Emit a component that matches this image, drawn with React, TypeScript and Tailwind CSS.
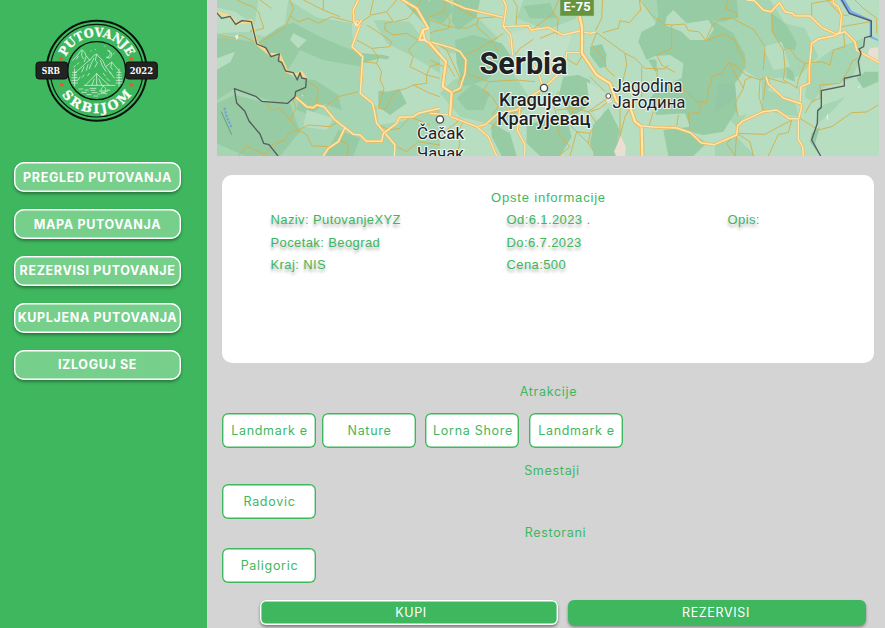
import React from "react";

const MENU = ["PREGLED PUTOVANJA", "MAPA PUTOVANJA", "REZERVISI PUTOVANJE", "KUPLJENA PUTOVANJA", "IZLOGUJ SE"];

function Logo() {
  return (
    <svg className="block h-[120px] w-[145px]" viewBox="0 0 435 360" fill="none">
      <defs>
        <path id="arcTop" d="M113 182A102 102 0 0 1 317 182" />
        <path id="arcBottom" d="M88 182A127 127 0 0 0 342 182" />
      </defs>
      <circle cx="215" cy="182" r="150" stroke="#08120b" strokeWidth="6" />
      <circle cx="215" cy="182" r="139" stroke="#08120b" strokeWidth="3.5" />
      <circle cx="215" cy="182" r="87" stroke="#08120b" strokeWidth="4" />
      <g fill="#fff" stroke="#fff" strokeWidth=".8" fontFamily="'DejaVu Serif',serif" fontWeight="700">
        <text textAnchor="middle" fontSize="37">
          <textPath href="#arcTop" startOffset="50%" textLength="234" lengthAdjust="spacingAndGlyphs">PUTOVANJE</textPath>
        </text>
        <text textAnchor="middle" fontSize="38">
          <textPath href="#arcBottom" startOffset="50%" textLength="246">SRBIJOM</textPath>
        </text>
      </g>
      <g fill="#ed5a24">
        <circle cx="108" cy="146" r="5.5" />
        <circle cx="319" cy="146" r="5.5" />
        <circle cx="110" cy="224" r="5.5" />
        <circle cx="319" cy="224" r="5.5" />
      </g>
      <g stroke="#dff5e4" strokeWidth="2.2" strokeLinecap="round" strokeLinejoin="round">
        <path d="M143 151L158 135L164 126L171 119L179 127L183 137L194 151" />
        <path d="M150 189L167 174L184 158L197 148L206 137L215 132L224 143L233 151L241 169L256 188L268 204" />
        <path d="M244 169L260 156L269 167L281 181" />
        <path d="M215 133L211 151L217 158L210 171M207 145L198 162L193 176M226 151L232 168L243 184M171 121L170 137L175 146M160 139L154 148M183 140L178 155M260 159L257 171L262 178M177 171L170 186M189 164L184 181" />
        <path d="M215 191L181 226M215 191L252 226M215 192V225M208 207L201 225M222 207L230 225M178 226H270" />
        <path d="M149 177V228M143 187H155M142 195H156M141 203H157M140 211H158M140 219H158" />
        <path d="M282 177V228M276 187H288M275 195H289M274 203H290M273 211H291M273 219H291" />
        <path d="M249 121C260 127 257 142 244 142C263 150 267 126 249 121Z" />
        <path d="M162 237H174M181 240H190M170 247H184M195 235H213M198 241H210M201 248H216M186 254H198M206 258H218M246 240H255M219 252H224" />
        <path d="M228 252L243 245M227 246L245 252M229 241C225 235 234 234 234 227C242 234 244 237 240 242M223 243H248" />
        <path d="M240 108V109M211 118V119M266 131V132M198 122V123M151 167L146 171M161 158L157 163M245 204L253 213M165 201L160 209M177 195L172 202M193 190L188 197M235 190L241 198M253 185L258 191" />
      </g>
      <g fill="#222423" stroke="#101211" strokeWidth="3">
        <rect x="33" y="156" width="95" height="51" rx="9" />
        <rect x="302" y="156" width="95" height="51" rx="9" />
      </g>
      <g fill="#fff" fontFamily="'DejaVu Serif',serif" fontWeight="700" fontSize="25">
        <text x="50" y="191" textLength="55" lengthAdjust="spacingAndGlyphs">SRB</text>
        <text x="314" y="191" textLength="70" lengthAdjust="spacingAndGlyphs">2022</text>
      </g>
    </svg>
  );
}

function Road({ d, w = 9 }: { d: string; w?: number }) {
  return (
    <g fill="none" strokeLinejoin="round">
      <path d={d} stroke="#eeb95f" strokeWidth={w} />
      <path d={d} stroke="#ffe7ac" strokeWidth={w * 0.5} />
    </g>
  );
}

function TripMap() {
  return (
    <svg className="block h-[156px] w-[662px]" viewBox="0 0 662 156">
      <rect width="662" height="156" fill="#b8dec2" />
      <g transform="translate(-7 0) scale(.333333)">
        <path fill="#a5d5b2" d="M20 0H235L320 52L425 70L430 145L455 172L450 280L500 320L505 375L600 360L690 390V470H20Z" />
        <path fill="#96cba4" d="M20 110L130 125L140 133L185 90L250 68L330 110L400 140L455 160L520 165L540 170L500 208L340 180L270 150L230 215L250 235L315 240L385 285L395 330L330 305L280 280L250 300L210 310L145 290L74 266L20 300Z" />
        <path fill="#96cba4" d="M74 285L155 305L240 310L270 395L210 468H105L20 430V310ZM385 390L450 415L430 468H345ZM505 245L550 230L590 310L540 345L505 320ZM575 0H655L690 30V90L650 80ZM270 280L310 270L345 310L300 345L260 330Z" />
        <path fill="#b8dec2" d="M20 22L75 35L125 68L120 95L20 100ZM145 0H235L225 70L165 110L130 100ZM455 190L510 175L600 190L625 255L530 275L450 265ZM250 100L290 120L265 145L240 120ZM20 175L75 155L62 185L20 210ZM290 330L370 355L350 390L280 380Z" />
        <path fill="#a5d5b2" d="M490 60L600 65L640 120L690 150V220L610 170L530 130ZM610 345L690 320V410L580 430L530 400Z" />
        <path fill="none" stroke="#d3b04b" strokeWidth="2.8" d="M80 0L105 12L130 20L145 35L162 85L120 95M150 0L185 25M20 105L80 116L90 105L145 130L195 100L225 82L240 50L250 25L240 0M240 48L265 65L295 55L325 70L365 50L440 70M280 0L340 30L390 50M340 30V0M455 65L485 45L530 35L560 0M480 45L490 0M530 35L550 65L525 70L525 90L550 105L590 100L625 120M555 65L595 55L635 0M440 120L485 145L540 140L545 125L495 90L470 75M485 145L505 170L500 190L460 185M500 190L515 215L510 240L522 265L515 290L505 325L525 328L555 275L590 265L610 255L660 280L690 290M625 120L595 150L610 170L600 200L650 225L690 235M690 190L660 200L650 225L650 250L610 255M295 245L325 265L318 315L345 320L385 290L445 275M255 290L250 300L258 325L240 360L265 390L290 405L305 435M168 310L185 330L210 325L240 360M265 390L235 400L225 420L185 435L165 465L110 438L85 468M265 390L295 375L360 380L385 365M305 438L370 440M385 415L415 435L410 468M505 375L540 390L570 385L600 350L660 375M550 435L590 455L625 425L690 435" />
        <Road d="M445 0L430 30L432 62L453 65L426 140L458 170L451 280L488 310L500 370L555 435L553 468" />
        <Road d="M430 62L442 78L455 60M255 290L290 320L310 323L320 315L342 320L375 360L405 383L430 403L450 405L470 424L515 424L520 400L560 370L568 352L610 350L625 340L690 325M405 383L385 425L355 445L340 468" />
        <Road w={11} d="M570 -5L620 25L655 85L638 90L645 120L694 170M638 90L628 120H645" />
        <path fill="none" stroke="#fbd887" strokeWidth="9" d="M20 38L60 50L80 70L124 62L140 130L180 163L208 165L230 214L260 224L275 218L288 237" />
        <path fill="none" stroke="#555c59" strokeWidth="4" strokeLinejoin="round" d="M20 38L35 55L60 49L77 73L96 62L124 65L140 132L167 143L183 170L208 162L205 183L215 187L227 213L250 218L262 240L270 218L275 234L289 237L287 262L257 275L255 290L233 310L155 304L137 289L73 266L80 309L104 333L117 363L150 402L161 430L177 434L204 468" />
        <path stroke="#6b9fe1" strokeWidth="6" fill="none" strokeDasharray="7 4" d="M43 323L50 350L65 382" />
        <path stroke="#6a9b83" strokeWidth="3" d="M34 335L65 404" />
        <path fill="#e8eded" d="M75 108l8-5 3 10-7 6zM432 70l7-4 3 10-5 3zM275 284l5 2-3 4z" />
      </g>
      <g transform="translate(213 0) scale(.333333)">
        <path fill="#a5d5b2" d="M0 0H50L150 60L205 115L160 160L60 160L0 120ZM280 0L410 0L440 55L350 90L260 55ZM70 240L170 200L250 220L310 310L210 380L90 350L30 280Z" />
        <path fill="#96cba4" d="M75 120L130 105L215 130L245 170L170 240L100 260L80 190ZM400 230L445 225L480 240V315L425 350L385 290ZM490 375L535 325L568 390L555 468H495L480 430ZM290 375L405 340L425 410L390 468H330L290 430ZM185 370L240 400L260 468H215L185 410ZM0 0H55L70 30L40 70L0 55ZM70 0H150L140 50L85 90L65 65ZM80 295L130 250L180 280L160 330L110 330ZM280 18L360 10L380 55L300 55Z" />
        <path fill="#c0e0c7" d="M310 80L425 105L400 185L330 190L240 145L230 105ZM470 245L530 280L510 370L480 320Z" />
        <path fill="none" stroke="#d3b04b" strokeWidth="2.8" d="M50 0L40 35L0 50M40 35L60 60L55 85L10 95L0 100M75 0L90 30L145 55L200 50M145 55L140 80L185 120L205 155M220 100L190 120L140 150L105 165M250 0L262 20L258 75M0 60L60 80L110 85L140 70M385 0L370 40L305 90L290 80M370 40L385 55L380 105M380 95L330 115M310 118L270 145L255 165M400 170L440 195L460 160M400 170L385 205M110 220L175 245L260 240L315 245M110 215L85 245L95 270L70 280M0 120L50 150L95 245M50 190L75 230M0 180L40 200M175 250L160 270L185 290L205 320L185 345M385 275L370 310L380 350L385 400L420 440L385 468M380 330L430 325L475 335L525 300L545 285M430 325L420 375L440 395L480 400L500 370L475 335M440 395L475 430L500 468M440 395L420 468M475 430L480 400M605 315L585 350L570 410L550 468M90 360L50 390L25 420L0 415M100 365L80 400L90 430L80 468M265 330L240 350L250 375M180 390L200 365L270 325L330 280" />
      </g>
      <g transform="translate(373 0) scale(.333333)">
        <path fill="#a5d5b2" d="M155 0H305L300 50L200 75L175 35ZM280 0H540V200L465 200L300 70ZM460 165L540 210V260L440 380L400 340Z" />
        <path fill="#96cba4" d="M200 0H440L445 50L400 65L365 60L430 100L465 165L462 205L440 250V330L400 395L340 405L300 395L350 430L310 468H235L220 390L300 380L285 340L200 345L175 300L210 260L275 235L280 190L240 165L195 168L170 180L145 125L155 95L195 75L205 45ZM0 140L35 132L50 165L45 200L30 205L0 165ZM10 375L55 325L88 390L75 468H10ZM175 180L195 178L215 205L195 215Z" />
        <path fill="#b8dec2" d="M230 50L250 30L290 70L355 60L372 88L350 120L300 120L275 95L225 75ZM200 185L240 165L280 195L265 235L235 232L200 210Z" />
        <path fill="#94c8a4" d="M385 255L435 248L455 270L430 300L375 340Z" />
        <path fill="none" stroke="#d3b04b" strokeWidth="2.8" d="M148 0L152 30L118 68L90 62L85 85L38 98M38 0L35 55L15 95M150 0L185 45L222 73L245 75L285 72L295 92L327 95L348 122L400 102L435 120L445 150L465 180V205M245 75V145L200 165L215 195L255 217M20 98L105 160L135 175L165 205L225 207L235 195M105 160L110 195L98 245M20 98L5 135L45 180L48 205L75 230M155 200V290M202 207L200 245L225 260M200 245L275 262L320 305L350 308L355 270L368 228L395 220L415 187M320 305L332 320L325 338L295 340L300 388M265 345L260 378M90 325V410M190 335L178 375M2 335L30 325L60 300M0 230L45 275" />
        <path fill="#eadfd4" d="M72 455L92 408L108 440L105 468H80ZM48 300l7-15 12 20-15 5z" />
      </g>
      <g transform="translate(213 0) scale(.333333)">
        <Road w={8} d="M35 -5L105 25L220 52M218 -5L229 20L220 80L242 105L248 165M220 80L295 77L303 90L355 82L400 105L448 93L480 100L497 96M455 158H410L405 205L340 265L300 290L260 330L205 340L165 374L140 380L62 348" />
        <Road w={8} d="M340 265L325 220L310 190M270 320L262 390L285 435L283 468M62 350L140 380L175 410L200 468M0 125L70 145L90 155L108 180L105 220L90 265L62 278M0 340L62 345" />
        <Road w={12} d="M-5 125L30 165L48 185L38 260L65 278L60 348" />
        <Road w={13} d="M448 45L456 80V160L500 225L540 250L560 305L600 320L615 365L635 380L637 470" />
      </g>
      <g transform="translate(438 0) scale(.333333)">
        <path fill="#a5d5b2" d="M345 0L390 70L450 85L490 170L430 230L350 235L330 200L330 130L300 80ZM530 150L625 115L615 180L590 235L500 265L475 310L450 290L460 200ZM550 300L570 290L535 330L490 370L490 320ZM310 260L420 300L430 350L320 330ZM180 430L240 405L300 468H180Z" />
        <path fill="#96cba4" d="M350 40L395 75L425 130L420 150L380 140L350 95ZM605 235L630 215H670V245L625 265ZM395 200L415 215L420 245L395 235Z" />
        <path fill="#b8dec2" d="M470 0H530L545 80L490 65ZM325 140L380 125L405 200L355 210ZM240 250L270 210L320 245V325L250 350Z" />
        <path fill="#94c8a4" d="M470 400L495 380L480 430L495 468L465 425Z" />
        <path fill="none" stroke="#d3b04b" strokeWidth="2.8" d="M220 0L212 25L245 40L247 52L200 57L172 75L152 122M235 57L295 88L330 140L325 210M350 38L352 95L385 150L390 205L385 240L430 265M385 150L405 145L425 175L450 190L500 185L525 195L535 150L570 140L565 95M515 0L555 42L580 48M560 80L648 65M600 0L625 25L665 55V100M530 0L470 10V48M222 187L240 195L272 225L315 240L333 232L395 250M222 187L265 265L240 310L250 350M265 265L270 240L290 230M315 240L312 290L325 333M333 232L325 300M245 400L330 403L410 360L400 398L370 403L340 468M245 400L285 425L295 468M245 400L215 430L240 468M245 400L240 468M435 355L490 390L530 380L590 338L635 336L670 315M450 340L470 305L495 295L495 255L555 250L580 212L592 182L610 175M425 265L430 240L450 190" />
        <path fill="#7baaf0" d="M553 -3L568 -3L590 32L650 60V108L670 119V123L644 113V62L582 43Z" />
        <path fill="#eadfd4" d="M635 170L645 145L670 142V190L650 182Z" />
        <Road d="M275 0L298 2L325 30L348 35L373 8L390 35L413 40L418 47L465 48L500 82L545 103L555 95L560 45L550 20L535 10V-5M545 103L570 95L600 125L605 150L672 188M545 106L490 117L470 130L463 200V250L438 260L435 310L440 320L430 360V418L443 440L445 470" />
        <Road d="M333 230L340 252L385 294L440 312M-40 378L-5 381L65 384L107 398L138 428L178 434L245 405L248 377L260 365L325 335L365 330L403 356H430" />
        <path fill="none" stroke="#54605d" strokeWidth="4" d="M560 0L583 40L649 63V108L629 113L626 140L612 147L618 160L610 185L616 225L568 235V258L499 272V322L488 332L487 370L470 420L497 468" />
        <path fill="#e8eded" d="M514 352l4-12 2 22zM608 260l8-3-4 8z" />
      </g>
      <rect x="343" y="-4" width="34" height="20" fill="#659441" stroke="#b0d0a0" strokeWidth=".5" />
      <text x="346.5" y="11" fontFamily="Roboto,sans-serif" fontWeight="700" fontSize="12" fill="#fff" textLength="27" lengthAdjust="spacingAndGlyphs">E-75</text>
      <g fill="#fff" stroke="#4b4d4d" strokeWidth="1.4">
        <circle cx="327" cy="88" r="3.6" />
        <circle cx="223" cy="119.5" r="3.6" />
        <circle cx="391.3" cy="96" r="2.4" strokeWidth="1" />
      </g>
      <g fontFamily="Roboto,sans-serif" fill="#202124" stroke="#fff" strokeWidth="2.2" strokeOpacity=".8" strokeLinejoin="round" paintOrder="stroke">
        <text x="262.5" y="73.5" fontWeight="700" fontSize="31" textLength="88" lengthAdjust="spacingAndGlyphs">Serbia</text>
        <text x="282" y="106" fontWeight="500" fontSize="18" textLength="90.5" lengthAdjust="spacingAndGlyphs">Kragujevac</text>
        <text x="280" y="124.5" fontWeight="500" fontSize="18" textLength="93.5" lengthAdjust="spacingAndGlyphs">Крагујевац</text>
        <text x="395.5" y="92" fontSize="17.5" textLength="70" lengthAdjust="spacingAndGlyphs">Jagodina</text>
        <text x="395.5" y="108" fontSize="17" textLength="73" lengthAdjust="spacingAndGlyphs">Јагодина</text>
        <text x="200" y="139" fontSize="17" textLength="47" lengthAdjust="spacingAndGlyphs">Čačak</text>
        <text x="200" y="159" fontSize="17" textLength="47" lengthAdjust="spacingAndGlyphs">Чачак</text>
      </g>
    </svg>
  );
}

function Chip({ children }: { children: React.ReactNode }) {
  return (
    <button className="flex h-[35px] w-[94px] shrink-0 items-center justify-center rounded-[6px] bg-white pt-px pl-px text-[12.5px] tracking-[0.7px] whitespace-nowrap text-[#3eb75e] shadow-[inset_0_0_0_1.4px_#3eb75e]">
      {children}
    </button>
  );
}

function Heading({ children }: { children: React.ReactNode }) {
  return <h2 className="h-5 pl-px text-center text-[12.5px] leading-5 tracking-[0.7px] text-[#3eb75e]">{children}</h2>;
}

export default function App() {
  return (
    <div className="flex h-[628px] w-[885px] overflow-hidden bg-[#d4d4d4] font-['Inter',sans-serif]">
      <aside className="w-[207.4px] shrink-0 bg-[#3eb75e]">
        <div className="pt-[10px] pl-[25px]">
          <Logo />
        </div>
        <nav className="mt-8 ml-[14px] flex flex-col gap-[16.9px]">
          {MENU.map((label) => (
            <button
              key={label}
              className="flex h-[30px] w-[167px] items-center justify-center rounded-[10px] bg-[#76cf8b] pt-[2px] text-[12.5px] font-bold tracking-[0.65px] whitespace-nowrap text-white shadow-[inset_0_0_0_1.4px_#fff,0_2px_3px_rgba(0,0,0,0.35)]"
            >
              {label}
            </button>
          ))}
        </nav>
      </aside>
      <main className="flex min-w-0 flex-1 flex-col">
        <div className="pl-[9.6px]">
          <TripMap />
        </div>
        <section className="mt-[19px] ml-[14.6px] h-[188px] w-[652px] rounded-[10px] bg-white pt-[13px] font-['Liberation_Sans',Arial,sans-serif] text-[13px] text-[#3eb75e]">
          <h2 className="h-5 pl-px text-center leading-5 tracking-[0.8px]">Opste informacije</h2>
          <div className="grid grid-cols-[236px_221px_auto] pt-px pl-[48.5px] leading-[22.6px] tracking-[0.4px] [text-shadow:0_3px_3px_rgba(0,0,0,0.3)]">
            <div>
              <p>Naziv: PutovanjeXYZ</p>
              <p>Pocetak: Beograd</p>
              <p>Kraj: NIS</p>
            </div>
            <div>
              <p>Od:6.1.2023 .</p>
              <p>Do:6.7.2023</p>
              <p>Cena:500</p>
            </div>
            <p>Opis:</p>
          </div>
        </section>
        <div className="mt-[19px] ml-[14.6px] w-[652px]">
          <Heading>Atrakcije</Heading>
          <div className="mt-[11px] flex">
            <Chip>Landmark e</Chip>
            <div className="ml-[6px] flex gap-[9.5px]">
              <Chip>Nature</Chip>
              <Chip>Lorna Shore</Chip>
              <Chip>Landmark e</Chip>
            </div>
          </div>
          <div className="mt-[13px] pl-[7px]">
            <Heading>Smestaji</Heading>
          </div>
          <div className="mt-[3px]">
            <Chip>Radovic</Chip>
          </div>
          <div className="mt-1 pl-[14px]">
            <Heading>Restorani</Heading>
          </div>
          <div className="mt-[5px]">
            <Chip>Paligoric</Chip>
          </div>
          <div className="mt-[17px] ml-[38px] flex gap-[10px] text-[12.5px] tracking-[0.65px] text-white">
            <button className="flex h-[25px] w-[298px] items-center justify-center rounded-[6px] bg-[#3eb75e] pt-[2px] pl-[4px] shadow-[inset_0_0_0_1.4px_#fff,0_2px_3px_rgba(0,0,0,0.4)]">
              KUPI
            </button>
            <button className="flex h-[25px] w-[298px] items-center justify-center rounded-[6px] bg-[#3eb75e] pt-px pr-[2px] shadow-[0_2px_3px_rgba(0,0,0,0.4)]">
              REZERVISI
            </button>
          </div>
        </div>
      </main>
    </div>
  );
}
